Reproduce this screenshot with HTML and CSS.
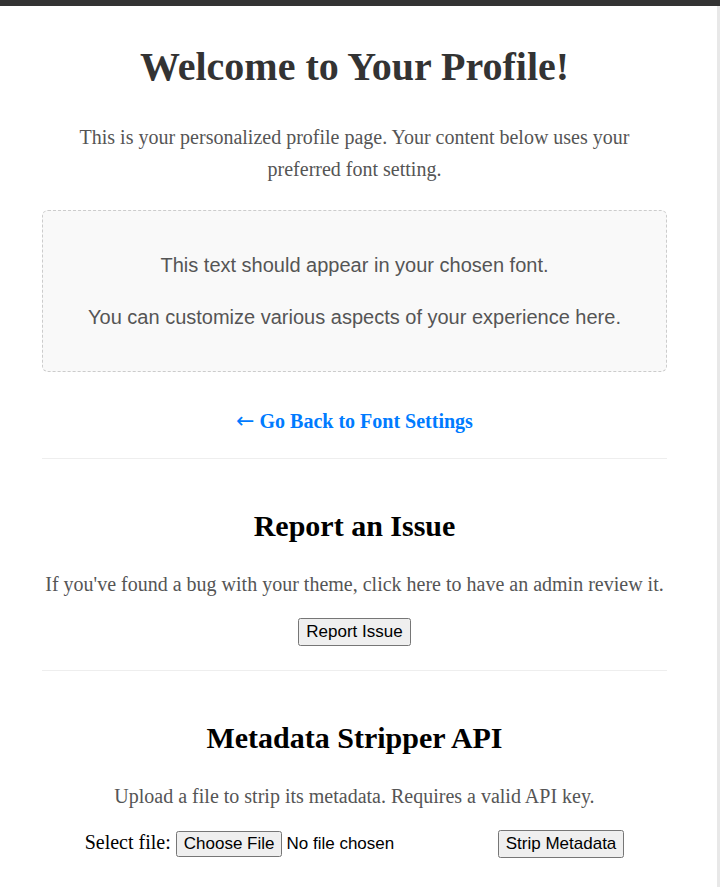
FILE: index.html
```html
<!DOCTYPE html>
<html lang="en">
<head>
<meta charset="utf-8">
<title>Your Profile</title>
<link rel="stylesheet" href="styles.css">
</head>
<body>
<div class="topbar"></div>
<div class="page">
  <main class="container">
    <h1 class="title">Welcome to Your Profile!</h1>
    <p class="intro">This is your personalized profile page. Your content below uses your preferred font setting.</p>
    <div class="font-box">
      <p>This text should appear in your chosen font.</p>
      <p>You can customize various aspects of your experience here.</p>
    </div>
    <p class="back"><a href="#" class="back-link"><span class="arrow">←</span> Go Back to Font Settings</a></p>
    <hr class="divider">
    <section class="section">
      <h2 class="section-title">Report an Issue</h2>
      <p class="section-text">If you've found a bug with your theme, click here to have an admin review it.</p>
      <div class="actions">
        <button class="btn" type="button">Report Issue</button>
      </div>
    </section>
    <hr class="divider">
    <section class="section">
      <h2 class="section-title">Metadata Stripper API</h2>
      <p class="section-text">Upload a file to strip its metadata. Requires a valid API key.</p>
      <form class="upload-form">
        <label class="file-label">Select file: <input type="file" class="file-input"></label>
        <button class="btn" type="button">Strip Metadata</button>
      </form>
    </section>
  </main>
</div>
</body>
</html>
```
FILE: styles.css
```css
html, body {
  margin: 0;
  padding: 0;
  background: #fff;
}
body {
  font-family: "Liberation Serif", "Times New Roman", serif;
  color: #333;
}
.topbar {
  width: 720px;
  height: 6px;
  background: #333;
}
.page {
  width: 717px;
  border-right: 3px solid #e8e8e8;
  min-height: 881px;
  display: flow-root;
}
.container {
  margin-left: 42px;
  width: 625px;
  display: flow-root;
}
.title {
  font-size: 40px;
  font-weight: bold;
  color: #333;
  text-align: center;
  margin: 38px 0 0;
  line-height: 46px;
}
.intro {
  font-size: 20px;
  line-height: 32px;
  color: #555;
  text-align: center;
  margin: 31px 0 0;
}
.font-box {
  margin-top: 25px;
  background: #f9f9f9;
  border: 1px dashed #ccc;
  border-radius: 6px;
  padding: 18px 20px;
  font-family: "Liberation Sans", Arial, sans-serif;
  font-size: 20px;
  color: #555;
  text-align: center;
}
.font-box p {
  margin: 20px 0;
  line-height: 32px;
}
.back {
  text-align: center;
  margin: 37px 0 25px;
  font-size: 20px;
  line-height: 24px;
}
.back-link {
  color: #007bff;
  font-weight: bold;
  text-decoration: none;
}
.arrow {
  font-family: "DejaVu Sans", sans-serif;
  font-weight: normal;
  font-size: 22px;
}
.divider {
  border: 0;
  border-top: 1px solid #eee;
  margin: 0;
}
.section {
  text-align: center;
  padding-bottom: 24px;
  display: flow-root;
}
.section-title {
  font-size: 30px;
  color: #000;
  margin: 49px 0 0;
  line-height: 36px;
}
.section-text {
  font-size: 20px;
  line-height: 28px;
  color: #555;
  margin: 26px 0 0;
}
.actions {
  display: flex;
  justify-content: center;
  margin-top: 20px;
}
.btn {
  font-family: "Liberation Sans", Arial, sans-serif;
  font-size: 17px;
  padding: 2px 6px;
  margin: 0;
}
.upload-form {
  display: flex;
  justify-content: center;
  align-items: center;
  gap: 0;
  margin-top: 20px;
}
.file-label {
  font-size: 20px;
  color: #000;
}
.file-input {
  font-family: "Liberation Sans", Arial, sans-serif;
  font-size: 17px;
}
```
